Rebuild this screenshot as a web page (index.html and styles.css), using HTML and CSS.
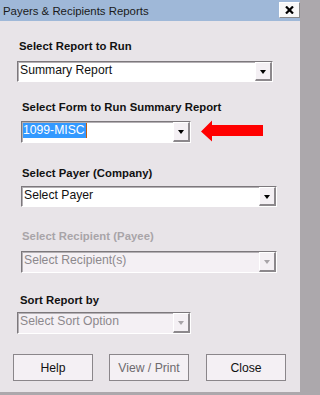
FILE: index.html
```html
<!DOCTYPE html>
<html>
<head>
<meta charset="utf-8">
<title>Payers &amp; Recipients Reports</title>
<link rel="stylesheet" href="styles.css">
</head>
<body>
<div class="window">
  <div class="titlebar">
    <span class="title">Payers &amp; Recipients Reports</span>
    <span class="close-btn">
      <svg width="9" height="8" viewBox="0 0 9 8"><path d="M1 0.5 L8 7.5 M8 0.5 L1 7.5" stroke="#000" stroke-width="2.2" fill="none"/></svg>
    </span>
  </div>
  <div class="content">
    <div class="label l1">Select Report to Run</div>
    <div class="field f1">
      <span class="value">Summary Report</span>
      <span class="drop"><span class="tri"></span></span>
    </div>

    <div class="label l2">Select Form to Run Summary Report</div>
    <div class="row r2">
      <div class="field f2">
        <span class="value"><span class="sel">1099-MISC</span></span>
        <span class="drop"><span class="tri"></span></span>
      </div>
      <svg class="pointer" width="63" height="22" viewBox="0 0 63 22">
        <path d="M0 11.5 L11 0.5 L11 5 L62 5 L62 16 L11 16 L11 21.5 Z" fill="#ff0000"/>
      </svg>
    </div>

    <div class="label l3">Select Payer (Company)</div>
    <div class="field f3">
      <span class="value">Select Payer</span>
      <span class="drop"><span class="tri"></span></span>
    </div>

    <div class="label l4 disabled">Select Recipient (Payee)</div>
    <div class="field f4 off">
      <span class="value">Select Recipient(s)</span>
      <span class="drop"><span class="tri"></span></span>
    </div>

    <div class="label l5">Sort Report by</div>
    <div class="field f5 off">
      <span class="value">Select Sort Option</span>
      <span class="drop"><span class="tri"></span></span>
    </div>

    <div class="buttons">
      <span class="btn">Help</span>
      <span class="btn dim">View / Print</span>
      <span class="btn">Close</span>
    </div>
  </div>
</div>
</body>
</html>
```

FILE: styles.css
```css
html, body {
  margin: 0;
  padding: 0;
  background: #aca8ac;
}

.window {
  box-sizing: border-box;
  width: 304px;
  height: 395px;
  background: #e8e4e8;
  border-right: 4px solid #aca8ac;
  border-bottom: 3px solid #aca8ac;
  font-family: "Liberation Sans", Arial, sans-serif;
  color: #111;
  overflow: hidden;
}

.titlebar {
  height: 21px;
  background: #9fb8d8;
  display: flex;
  align-items: flex-start;
  justify-content: space-between;
}

.title {
  font-size: 11.4px;
  line-height: 13px;
  margin: 5px 0 0 3px;
  color: #1a1a1a;
}

.close-btn {
  box-sizing: border-box;
  width: 21px;
  height: 16px;
  margin: 2px 0 0 0;
  background: #f8f8f8;
  border-right: 1px solid #8a8a8a;
  border-bottom: 1px solid #8a8a8a;
  border-top: 1px solid #ffffff;
  border-left: 1px solid #ffffff;
  display: flex;
  align-items: center;
  justify-content: center;
}

.content {
  display: flex;
  flex-direction: column;
  align-items: flex-start;
}

.label {
  font-size: 11.3px;
  font-weight: bold;
  line-height: 13px;
  letter-spacing: 0.05px;
  white-space: nowrap;
}

.label.disabled {
  color: #a8a4a8;
}

.l1 { margin: 19px 0 0 19px; }
.l2 { margin: 19px 0 0 22px; }
.l3 { margin: 24px 0 0 22px; }
.l4 { margin: 23px 0 0 22px; }
.l5 { margin: 21px 0 0 20px; }

.field {
  box-sizing: border-box;
  height: 22px;
  background: #ffffff;
  border-top: 1px solid #7c787c;
  border-left: 1px solid #7c787c;
  border-right: 1px solid #ffffff;
  border-bottom: 1px solid #ffffff;
  box-shadow: inset 1px 1px 0 #b4b0b4;
  display: flex;
  align-items: stretch;
  font-size: 12.2px;
}

.field.off {
  background: #f4f0f4;
  color: #8c888c;
}

.value {
  flex: 1;
  padding: 1px 0 0 2px;
  line-height: 15px;
  white-space: nowrap;
  overflow: hidden;
}

.sel {
  display: inline-block;
  background: #3399ff;
  color: #ffffff;
  border-right: 1px solid #c05a10;
  padding-right: 1px;
  margin-left: -1px;
}

.drop {
  box-sizing: border-box;
  width: 17px;
  background: #f4f0f4;
  border-top: 1px solid #ffffff;
  border-left: 1px solid #ffffff;
  border-right: 2px solid #8c888c;
  border-bottom: 2px solid #8c888c;
  display: flex;
  align-items: center;
  justify-content: center;
}

.tri {
  width: 0;
  height: 0;
  border-left: 3.5px solid transparent;
  border-right: 3.5px solid transparent;
  border-top: 4px solid #000;
  margin-top: 1px;
}

.off .tri {
  border-top-color: #a8a4a8;
}

.f1 { margin: 8px 0 0 17px; width: 256px; height: 21px; }
.r2 { margin: 7px 0 0 21px; display: flex; align-items: flex-start; }
.f2 { width: 170px; }
.pointer { margin: -1px 0 0 10px; }
.f3 { margin: 6px 0 0 21px; width: 256px; height: 21px; }
.f4 { margin: 8px 0 0 21px; width: 256px; }
.f5 { margin: 5px 0 0 17px; width: 174px; }

.buttons {
  display: flex;
  margin: 20px 0 0 13px;
}

.btn {
  box-sizing: border-box;
  width: 80px;
  height: 27px;
  background: #f4f0f4;
  border: 1px solid #8a868a;
  display: flex;
  align-items: center;
  justify-content: center;
  font-size: 12.2px;
  color: #111;
}

.btn + .btn { margin-left: 16px; }
.btn:last-child { margin-left: 17px; }
.btn.dim { color: #6e6a6e; }
```
